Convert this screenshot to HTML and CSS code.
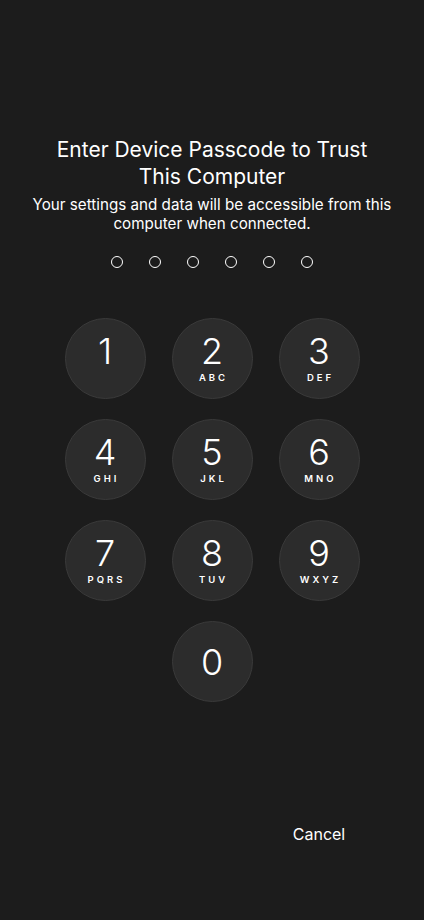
FILE: index.html
```html
<!DOCTYPE html>
<html lang="en">
<head>
  <meta charset="UTF-8" />
  <meta name="viewport" content="width=device-width, initial-scale=1.0" />
  <title>Enter Passcode</title>
  <link rel="stylesheet" href="styles.css">
</head>
<body>

<main class="screen">
  <h1 class="title">Enter Device Passcode to Trust This Computer</h1>
  <p class="subtitle">Your settings and data will be accessible from this computer when connected.</p>

  <div class="dots">
    <span class="dot"></span>
    <span class="dot"></span>
    <span class="dot"></span>
    <span class="dot"></span>
    <span class="dot"></span>
    <span class="dot"></span>
  </div>

  <div class="keypad">
    <button class="key"><span class="num">1</span><span class="letters">&nbsp;</span></button>
    <button class="key"><span class="num">2</span><span class="letters">ABC</span></button>
    <button class="key"><span class="num">3</span><span class="letters">DEF</span></button>
    <button class="key"><span class="num">4</span><span class="letters">GHI</span></button>
    <button class="key"><span class="num">5</span><span class="letters">JKL</span></button>
    <button class="key"><span class="num">6</span><span class="letters">MNO</span></button>
    <button class="key"><span class="num">7</span><span class="letters">PQRS</span></button>
    <button class="key"><span class="num">8</span><span class="letters">TUV</span></button>
    <button class="key"><span class="num">9</span><span class="letters">WXYZ</span></button>
    <button class="key key-zero"><span class="num">0</span></button>
  </div>

  <div class="actions">
    <a href="#" class="cancel">Cancel</a>
  </div>
</main>

</body>
</html>
```

FILE: styles.css
```css
body {
  font-family: 'Inter', 'Roboto', sans-serif;
  background-color: #1c1c1c;
  color: #ffffff;
  margin: 0;
}
.screen {
  min-height: 920px;
  padding-top: 136px;
  box-sizing: border-box;
  text-align: center;
}
.title {
  font-size: 21px;
  font-weight: 400;
  line-height: 27px;
  margin: 0 auto;
  width: 330px;
}
.subtitle {
  font-size: 15.2px;
  line-height: 19px;
  margin: 5px auto 0;
  width: 400px;
}
.dots {
  display: flex;
  justify-content: center;
  gap: 26px;
  margin-top: 23px;
}
.dot {
  width: 10px;
  height: 10px;
  border: 1.5px solid #ffffff;
  border-radius: 50%;
}
.keypad {
  display: grid;
  grid-template-columns: repeat(3, 81px);
  column-gap: 26px;
  row-gap: 20px;
  justify-content: center;
  margin-top: 50px;
}
.key {
  width: 81px;
  height: 81px;
  border-radius: 50%;
  border: 1px solid #3a3a3a;
  background-color: #2c2c2c;
  color: #ffffff;
  font-family: inherit;
  padding: 0;
  display: flex;
  flex-direction: column;
  align-items: center;
  justify-content: center;
}
.key-zero {
  grid-column: 2;
}
.num {
  font-size: 36px;
  font-weight: 300;
  line-height: 32px;
}
.letters {
  font-size: 9.5px;
  font-weight: 600;
  letter-spacing: 3px;
  line-height: 11px;
  margin-top: 5px;
  padding-left: 3px;
}
.actions {
  display: grid;
  grid-template-columns: repeat(3, 81px);
  column-gap: 26px;
  justify-content: center;
  margin-top: 122px;
}
.cancel {
  grid-column: 3;
  color: #ffffff;
  text-decoration: none;
  font-size: 16px;
}
```
